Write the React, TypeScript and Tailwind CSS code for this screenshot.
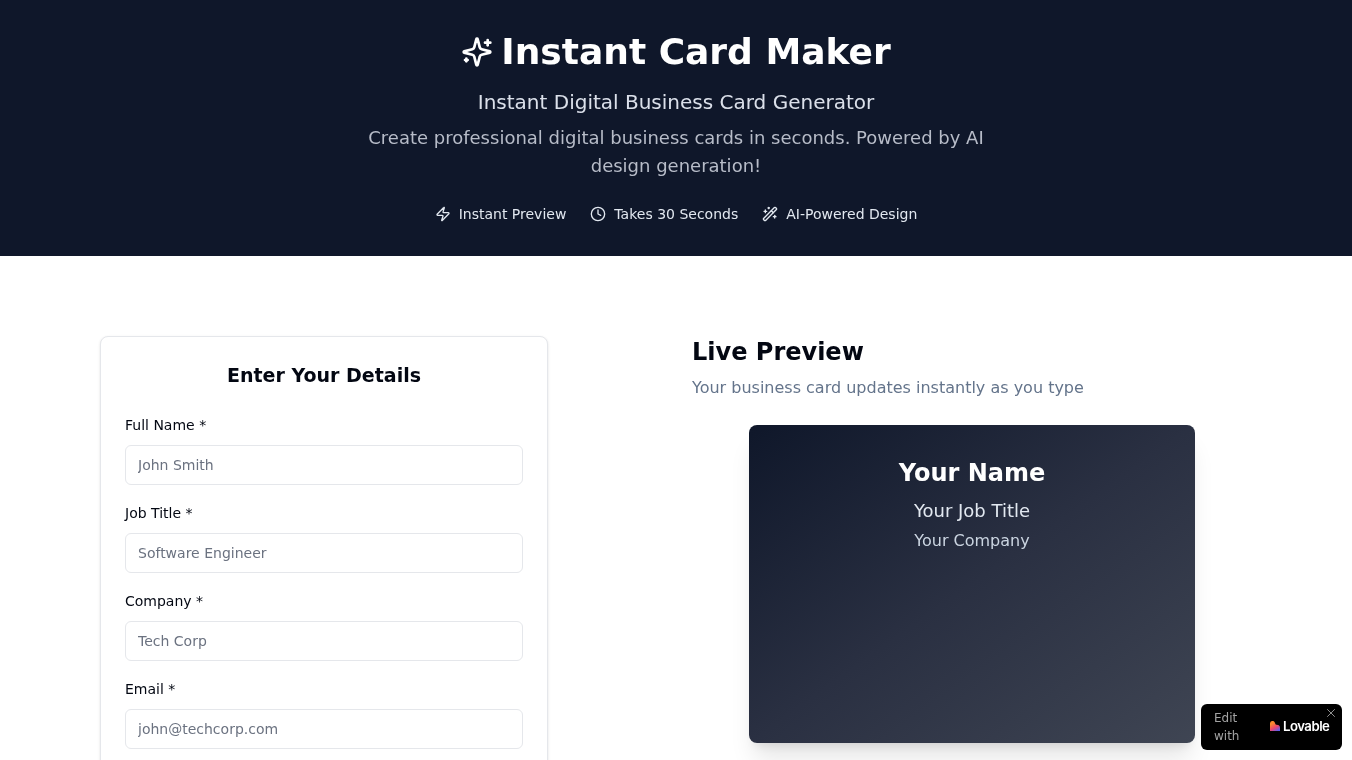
import React from "react";
import { Zap, Clock, WandSparkles, X } from "lucide-react";

const fields = [
    { label: "Full Name *", placeholder: "John Smith" },
    { label: "Job Title *", placeholder: "Software Engineer" },
    { label: "Company *", placeholder: "Tech Corp" },
    { label: "Email *", placeholder: "john@techcorp.com" },
];

const features = [
    { icon: Zap, text: "Instant Preview" },
    { icon: Clock, text: "Takes 30 Seconds" },
    { icon: WandSparkles, text: "AI-Powered Design" },
];

const App = () => {
    return (
        <div className="h-[760px] overflow-hidden bg-white font-['DejaVu_Sans',sans-serif] will-change-transform">
            <header className="bg-[#0f172a] py-8 text-center text-white">
                <div className="flex items-center justify-center gap-2">
                    <svg width="32" height="32" viewBox="0 0 24 24" fill="none" stroke="currentColor" strokeWidth="2" strokeLinecap="round" strokeLinejoin="round">
                        <path d="M9.937 15.5A2 2 0 0 0 8.5 14.063l-6.135-1.582a.5.5 0 0 1 0-.962L8.5 9.936A2 2 0 0 0 9.937 8.5l1.582-6.135a.5.5 0 0 1 .963 0L14.063 8.5A2 2 0 0 0 15.5 9.937l6.135 1.581a.5.5 0 0 1 0 .964L15.5 14.063a2 2 0 0 0-1.437 1.437l-1.582 6.135a.5.5 0 0 1-.963 0z" />
                        <path d="M20 3v4" />
                        <path d="M22 5h-4" />
                        <path d="M4 17v2" />
                        <path d="M5 18H3" />
                    </svg>
                    <h1 className="text-4xl font-bold">Instant Card Maker</h1>
                </div>
                <p className="mt-4 text-xl leading-7 text-[#dbe0ea]">Instant Digital Business Card Generator</p>
                <p className="mx-auto mt-2 max-w-2xl text-lg leading-7 text-[#b7bcc8]">
                    Create professional digital business cards in seconds. Powered by AI design generation!
                </p>
                <div className="mt-6 flex items-center justify-center gap-6">
                    {features.map((f) => (
                        <div key={f.text} className="flex items-center gap-2 text-sm text-[#e2e8f0]">
                            <f.icon className="h-4 w-4" />
                            <span>{f.text}</span>
                        </div>
                    ))}
                </div>
            </header>

            <main className="mx-auto grid max-w-6xl grid-cols-[544px_560px] gap-12 py-20">
                <div className="w-[448px] rounded-lg border border-[#e5e7eb] bg-white p-6 shadow-sm">
                    <h2 className="mb-[26px] text-center text-[19px] leading-7 font-bold text-[#030712]">Enter Your Details</h2>
                    <div className="flex flex-col gap-[18px]">
                        {fields.map((field) => (
                            <div key={field.label}>
                                <label className="mb-2.5 block text-sm leading-5 text-[#030712]">{field.label}</label>
                                <input
                                    placeholder={field.placeholder}
                                    className="h-10 w-full rounded-md border border-[#e5e7eb] bg-white px-3 text-sm placeholder:text-[#6b7280]"
                                />
                            </div>
                        ))}
                    </div>
                </div>

                <div>
                    <h2 className="text-2xl font-bold text-[#030712]">Live Preview</h2>
                    <p className="mt-2 text-base text-[#64748b]">Your business card updates instantly as you type</p>
                    <div className="mt-[25px] flex justify-center">
                        <div className="h-[318px] w-[446px] rounded-lg bg-gradient-to-br from-[#0f172a] via-[#2a3042] to-[#3f4553] pt-8 text-center text-white shadow-xl">
                            <div className="text-2xl font-bold">Your Name</div>
                            <div className="mt-2 text-lg text-[#e2e8f0]">Your Job Title</div>
                            <div className="mt-1 text-base text-[#cbd5e1]">Your Company</div>
                        </div>
                    </div>
                </div>
            </main>

            <div className="fixed bottom-[10px] right-[10px] flex h-[46px] w-[141px] items-center rounded-md bg-black pl-[13px] text-white">
                <span className="w-[40px] text-xs leading-[18px] text-[#a3a3a3]">Edit with</span>
                <div className="ml-[16px] flex items-center gap-[3px]">
                    <svg width="10" height="10" viewBox="0 0 10 10" className="mb-[2px]">
                        <defs>
                            <linearGradient id="lovableHeart" x1="0.2" y1="0" x2="0.8" y2="1">
                                <stop offset="0.2" stopColor="#fb8a2e" />
                                <stop offset="0.6" stopColor="#f0466e" />
                                <stop offset="1" stopColor="#5b5ff0" />
                            </linearGradient>
                        </defs>
                        <path d="M0 2.500a2.500 2.500 0 0 1 4.800-1c.4 1 .7 2 1.400 2.200A3.200 3.200 0 0 1 10 6.800V10H0z" fill="url(#lovableHeart)" />
                    </svg>
                    <span className="font-['Inter',sans-serif] text-[13.200px] font-semibold tracking-[-0.5px]">Lovable</span>
                </div>
                <X strokeWidth={1.5} className="absolute right-1 top-[2px] h-[14px] w-[14px] text-[#a3a3a3]" />
            </div>
        </div>
    );
};

export default App;
